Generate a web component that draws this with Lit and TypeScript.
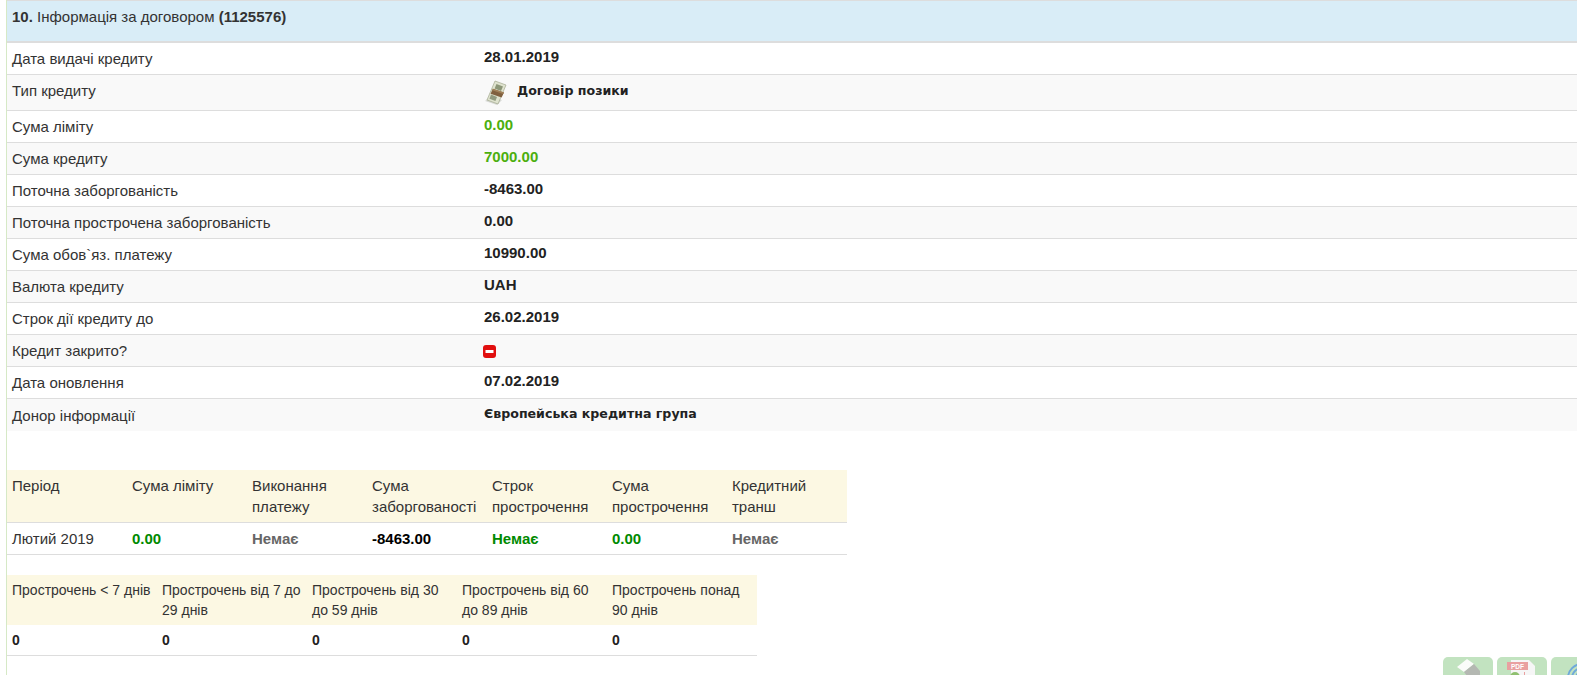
import { LitElement, css, html, svg } from 'lit';
import { customElement } from 'lit/decorators.js';

type Row = { label: string; value: string; color?: string; tall?: boolean; kind?: string };

const rows: Row[] = [
  { label: 'Дата видачі кредиту', value: '28.01.2019' },
  { label: 'Тип кредиту', value: 'Договір позики', tall: true, kind: 'money' },
  { label: 'Сума ліміту', value: '0.00', color: 'green' },
  { label: 'Сума кредиту', value: '7000.00', color: 'green' },
  { label: 'Поточна заборгованість', value: '-8463.00' },
  { label: 'Поточна прострочена заборгованість', value: '0.00' },
  { label: 'Сума обов`яз. платежу', value: '10990.00' },
  { label: 'Валюта кредиту', value: 'UAH' },
  { label: 'Строк дії кредиту до', value: '26.02.2019' },
  { label: 'Кредит закрито?', value: '', kind: 'stop' },
  { label: 'Дата оновлення', value: '07.02.2019' },
  { label: 'Донор інформації', value: 'Європейська кредитна група', kind: 'small' },
];

const period = [
  ['Період', 'Лютий 2019', ''],
  ['Сума ліміту', '0.00', 'ok'],
  ['Виконання платежу', 'Немає', 'grey'],
  ['Сума заборгованості', '-8463.00', 'black'],
  ['Строк прострочення', 'Немає', 'ok'],
  ['Сума прострочення', '0.00', 'ok'],
  ['Кредитний транш', 'Немає', 'grey'],
];

const overdue = [
  'Прострочень < 7 днів',
  'Прострочень від 7 до 29 днів',
  'Прострочень від 30 до 59 днів',
  'Прострочень від 60 до 89 днів',
  'Прострочень понад 90 днів',
];

const moneyIcon = svg`<svg width="24" height="26" viewBox="0 0 24 26">
  <path d="M1 21 L13 25 L18 20 L7 16 Z" fill="#d8dad6"/>
  <path d="M11 1 L22 5 L14 24 L3 20 Z" fill="#dfe3cf" stroke="#a3a98f" stroke-width=".7"/>
  <path d="M12.5 4 L19 6.5 L17 11 L10.6 8.6 Z" fill="#8c9678"/>
  <path d="M7 14.5 L13 17 L11.4 21 L5.5 18.7 Z" fill="#929b80"/>
  <path d="M8.9 8.8 L20 12.6 L17.6 17.6 L6.6 13.8 Z" fill="#80603f"/>
  <path d="M8.9 8.8 L20 12.6 L19.3 14 L8.3 10.2 Z" fill="#a08058"/>
</svg>`;

const stopIcon = svg`<svg width="13" height="13" viewBox="0 0 13 13">
  <rect width="13" height="13" rx="3" fill="#e10f0f"/>
  <rect x="2.5" y="5" width="8" height="3" fill="#fff"/>
</svg>`;

const printIcon = svg`<svg width="30" height="18" viewBox="0 0 30 18">
  <path d="M4 9 L14 1 L21 6 L11 14 Z" fill="#fbfcfa"/>
  <path d="M11 14 L21 6 L27 13 L27 18 L14 18 Z" fill="#b4b8b2"/>
</svg>`;

const pdfIcon = svg`<svg width="30" height="18" viewBox="0 0 30 18">
  <path d="M4 2 H22 L28 8 V18 H4 Z" fill="#f6f6f6"/>
  <rect x="0" y="4" width="21" height="8" fill="#e9a0a0"/>
  <text x="10.5" y="10.5" font-size="6.5" font-family="Liberation Sans" font-weight="700" text-anchor="middle" fill="#fff">PDF</text>
  <circle cx="8" cy="19" r="5" fill="#8fc06f"/>
  <rect x="17" y="14" width="1" height="4" fill="#e9a0a0"/>
</svg>`;

const mailIcon = svg`<svg width="26" height="18" viewBox="0 0 26 18" fill="none" stroke="#6fa9da" stroke-width="2">
  <circle cx="19" cy="20" r="6"/><circle cx="19" cy="20" r="10"/><circle cx="19" cy="20" r="14"/>
</svg>`;

@customElement('app-root')
export class AppRoot extends LitElement {
  static styles = css`
    :host {
      display: block;
      height: 675px;
      overflow: hidden;
      position: relative;
      background: #fff;
      font-family: 'Liberation Sans', Arial, sans-serif;
      font-size: 15px;
      color: #333;
    }
    .page {
      margin-left: 6px;
      border-left: 1px solid #d6e9c6;
      min-height: 675px;
    }
    .head {
      box-sizing: border-box;
      height: 43px;
      border-top: 1px solid #ddd;
      border-bottom: 2px solid #ddd;
      background: #d9edf7;
      padding: 7px 5px;
      line-height: 17px;
    }
    .row {
      display: grid;
      grid-template-columns: 472px 1fr;
      height: 32px;
      box-sizing: border-box;
      border-bottom: 1px solid #ddd;
      padding: 0 5px;
      align-items: center;
    }
    .row.tall { height: 36px; }
    .row:nth-child(even) { background: #f9f9f9; }
    .row:last-child { border-bottom: 0; }
    .label { position: relative; }
    .tall .label { top: -2px; }
    .val {
      font-weight: 700;
      color: #222;
      display: flex;
      align-items: center;
      gap: 9px;
      position: relative;
      top: -2px;
    }
    .val.green { color: #4caf0e; }
    .val.small, .val.money {
      font-family: 'DejaVu Sans', sans-serif;
      font-size: 12.6px;
    }
    .val.money svg { position: relative; top: 2px; }
    .val.stop svg { position: relative; top: 3px; left: -1px; }
    .t1 {
      width: 840px;
      margin-top: 39px;
      display: grid;
      grid-template-columns: repeat(7, 120px);
    }
    .th {
      background: #fcf8e3;
      padding: 5px;
      line-height: 21px;
      border-bottom: 1px solid #ddd;
      height: 42px;
    }
    .td {
      padding: 0 5px;
      height: 31px;
      line-height: 31px;
      border-bottom: 1px solid #ddd;
      font-weight: 700;
    }
    .td.plain { font-weight: 400; }
    .td.ok { color: #008a00; }
    .td.grey { color: #666; }
    .td.black { color: #000; }
    .t2 {
      width: 750px;
      margin-top: 20px;
      display: grid;
      grid-template-columns: repeat(5, 150px);
      font-size: 14px;
    }
    .t2 .th {
      padding: 5px;
      line-height: 20px;
      border-bottom: 0;
      height: 40px;
    }
    .t2 .td { color: #222; height: 30px; line-height: 30px; }
    .btns {
      position: absolute;
      left: 1443px;
      top: 657px;
      display: flex;
      gap: 4px;
    }
    .btn {
      width: 50px;
      height: 40px;
      flex: none;
      border-radius: 5px;
      background: #c2e3c0;
      display: flex;
      justify-content: center;
      padding-top: 1px;
      box-sizing: border-box;
    }
  `;

  render() {
    return html`
      <div class="page">
        <div class="head"><b>10.</b> Інформація за договором <b>(1125576)</b></div>
        <div>
          ${rows.map(
            (r) => html`
              <div class="row ${r.tall ? 'tall' : ''}">
                <div class="label">${r.label}</div>
                <div class="val ${r.color ?? ''} ${r.kind ?? ''}">
                  ${r.kind === 'money' ? moneyIcon : ''}${r.kind === 'stop' ? stopIcon : ''}${r.value}
                </div>
              </div>
            `,
          )}
        </div>
        <div class="t1">
          ${period.map((c) => html`<div class="th">${c[0]}</div>`)}
          ${period.map((c) => html`<div class="td ${c[2] || 'plain'}">${c[1]}</div>`)}
        </div>
        <div class="t2">
          ${overdue.map((c) => html`<div class="th">${c}</div>`)}
          ${overdue.map(() => html`<div class="td">0</div>`)}
        </div>
      </div>
      <div class="btns">
        <div class="btn">${printIcon}</div>
        <div class="btn">${pdfIcon}</div>
        <div class="btn">${mailIcon}</div>
      </div>
    `;
  }
}
